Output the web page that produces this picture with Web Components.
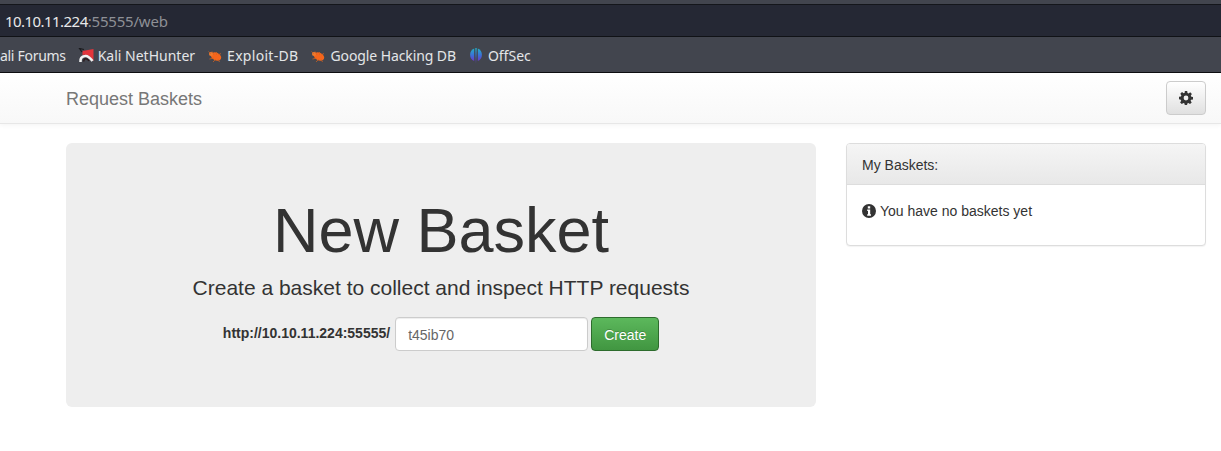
<!DOCTYPE html>
<html>
<head>
<meta charset="utf-8">
<style>
html, body { margin: 0; padding: 0; background: #fff; overflow: hidden; }
body { font: 14px/20px "Liberation Sans", Arial, sans-serif; color: #333; }
</style>
</head>
<body>
<browser-chrome>
    <bookmark-item label="ali Forums" style="letter-spacing: -.3px"></bookmark-item>
    <bookmark-item label="Kali NetHunter" icon="kali"></bookmark-item>
    <bookmark-item label="Exploit-DB" icon="bug" style="letter-spacing: .3px"></bookmark-item>
    <bookmark-item label="Google Hacking DB" icon="bug" style="letter-spacing: -.1px"></bookmark-item>
    <bookmark-item label="OffSec" icon="offsec"></bookmark-item>
</browser-chrome>
<basket-nav title-text="Request Baskets"></basket-nav>
<basket-page>
    <basket-jumbo slot="main" url="http://10.10.11.224:55555/" value="t45ib70"></basket-jumbo>
    <basket-panel slot="side" heading="My Baskets:">You have no baskets yet</basket-panel>
</basket-page>
<script>
const kIcons = {
    kali: `<svg width="16" height="16" viewBox="0 0 16 16"><path d="M4.500 3 L15.500 1 L15.500 13 L12 9 Q9 6 4.500 7Z" fill="#e2353c"/><path d="M2.500 14 Q2 8.500 7 8 Q10.500 7.500 14.500 13" stroke="#f2f2f2" stroke-width="2.600" fill="none"/><path d="M6 13.500 Q5.500 11 7.500 10.800 Q9.500 10.500 11 13" stroke="#2a1a1c" stroke-width="1.400" fill="none"/><path d="M6 1.500 L1.500 0.500 L4 4" stroke="#1b1b1e" stroke-width="1.200" fill="none"/></svg>`,
    bug: `<svg width="16" height="16" viewBox="0 0 16 16"><defs><filter id="b" x="-20%" y="-20%" width="140%" height="140%"><feGaussianBlur stdDeviation=".45"/></filter></defs><g filter="url(#b)"><ellipse cx="9" cy="8.500" rx="5.500" ry="3.800" transform="rotate(25 9 8.500)" fill="#f5651a"/><circle cx="4" cy="6" r="2" fill="#ef7a2e"/><path d="M1.500 3.500 L4 6 M5 3.500 L7 7 M9.500 4 L9.500 7 M14 5.500 L11 7 M2.500 11 L7 10 M6 14 L9 11 M12.500 14 L11 11" stroke="#d9651c" stroke-opacity=".7" stroke-width="1" fill="none"/></g></svg>`,
    offsec: `<svg width="16" height="17" viewBox="0 0 16 17"><defs><linearGradient id="o" x1="0" y1="0" x2="0" y2="1"><stop offset="0" stop-color="#22b0c8"/><stop offset=".55" stop-color="#3c6fd8"/><stop offset="1" stop-color="#6a38c8"/></linearGradient></defs><path d="M6.200 1.500 A7.500 7 0 0 0 6.200 14 Z" fill="url(#o)"/><path d="M9.800 1.500 A7.500 7 0 0 1 9.800 14 Z" fill="url(#o)"/><path d="M7.300 1 H8.700 L8.400 10 L8 16.500 L7.600 10Z" fill="url(#o)"/></svg>`
}

window.customElements.define('browser-chrome', class extends HTMLElement {
    constructor () {
        super()
        this.attachShadow({ mode: 'open' }).innerHTML = `<style>
        :host { display: block; font: 15px/20px "Noto Sans", "DejaVu Sans", sans-serif; }
        .top { height: 4px; background: #42454e; border-bottom: 1px solid #14161b; }
        .url { height: 31px; background: #252834; border-bottom: 1px solid #101216; display: flex; align-items: center; padding-left: 5px; color: #e8e8ea; letter-spacing: -.55px; }
        .url span { color: #8e9096; letter-spacing: -.2px; }
        .marks { height: 33px; padding-top: 2px; background: #42454e; border-bottom: 1px solid #0d0e11; display: flex; align-items: center; gap: 12px; overflow: hidden; color: #e4e6e8; font-size: 14px; }
        </style>
        <div class="top"></div>
        <div class="url">10.10.11.224<span>:55555/web</span></div>
        <div class="marks"><slot></slot></div>`
    }
})

window.customElements.define('bookmark-item', class extends HTMLElement {
    constructor () {
        super()
        const icon = kIcons[this.getAttribute('icon')] || ''
        this.attachShadow({ mode: 'open' }).innerHTML = `<style>
        :host { display: flex; align-items: center; gap: 4px; white-space: nowrap; flex: none; }
        svg { display: block; }
        </style>${icon}<span>${this.getAttribute('label')}</span>`
    }
})

window.customElements.define('basket-nav', class extends HTMLElement {
    constructor () {
        super()
        this.attachShadow({ mode: 'open' }).innerHTML = `<style>
        :host { display: flex; align-items: center; justify-content: space-between; box-sizing: border-box; height: 51px; padding: 0 15px 0 66px; background: linear-gradient(#fff, #f8f8f8); border-bottom: 1px solid #e7e7e7; box-shadow: 0 1px 5px rgba(0,0,0,.05); }
        .brand { font-size: 18px; color: #777; padding-top: 2px; }
        button { box-sizing: border-box; width: 40px; height: 34px; padding: 0; border: 1px solid #ccc; border-radius: 4px; background: linear-gradient(#fff, #e0e0e0); display: flex; align-items: center; justify-content: center; }
        </style>
        <span class="brand">${this.getAttribute('title-text')}</span>
        <button aria-label="Settings"><svg width="14" height="14" viewBox="0 0 14 14"><path fill="#333" fill-rule="evenodd" d="M5.800 0h2.400l.3 1.900 1.100.5L11.200 1.300l1.700 1.700-1.100 1.600.5 1.100 1.700.3v2.400l-1.900.3-.5 1.100 1.100 1.600-1.700 1.700-1.600-1.100-1.100.5-.3 1.900H5.800l-.3-1.900-1.100-.5-1.600 1.100-1.700-1.700 1.100-1.600-.5-1.100L0 8.200V5.800l1.900-.3.5-1.100L1.300 2.800 3 1.100l1.600 1.100 1.100-.5zM7 4.600a2.400 2.400 0 1 0 0 4.800 2.400 2.400 0 0 0 0-4.800z"/></svg></button>`
    }
})

window.customElements.define('basket-page', class extends HTMLElement {
    constructor () {
        super()
        this.attachShadow({ mode: 'open' }).innerHTML = `<style>
        :host { display: grid; grid-template-columns: 750px 360px; column-gap: 30px; padding: 19px 15px 0 66px; align-items: start; }
        </style>
        <slot name="main"></slot><slot name="side"></slot>`
    }
})

window.customElements.define('basket-jumbo', class extends HTMLElement {
    constructor () {
        super()
        this.attachShadow({ mode: 'open' }).innerHTML = `<style>
        :host { display: block; box-sizing: border-box; height: 264px; padding-top: 47px; background: #eee; border-radius: 6px; text-align: center; }
        h1 { margin: 0; font-size: 63px; font-weight: 500; line-height: 80px; color: #333; }
        p { margin: 3px 0 0; font-size: 21px; line-height: 30px; font-weight: 400; }
        form { margin-top: 14px; display: flex; justify-content: center; align-items: center; gap: 3px; }
        b { font-size: 14px; margin-right: 2px; margin-top: -3px; }
        input { box-sizing: border-box; width: 193px; height: 34px; padding: 8px 12px 6px; border: 1px solid #ccc; border-radius: 4px; font: 14px "Liberation Sans", sans-serif; color: #666; background: #fff; box-shadow: inset 0 1px 1px rgba(0,0,0,.075); }
        button { box-sizing: border-box; width: 68px; height: 34px; padding: 2px 0 0; border: 1px solid #2d6c2d; border-radius: 4px; background: linear-gradient(#5cb85c, #419641); color: #fff; font: 14px "Liberation Sans", sans-serif; text-shadow: 0 -1px 0 rgba(0,0,0,.2); }
        </style>
        <h1>New Basket</h1>
        <p>Create a basket to collect and inspect HTTP requests</p>
        <form><b>${this.getAttribute('url')}</b><input value="${this.getAttribute('value')}"><button type="button">Create</button></form>`
    }
})

window.customElements.define('basket-panel', class extends HTMLElement {
    constructor () {
        super()
        this.attachShadow({ mode: 'open' }).innerHTML = `<style>
        :host { display: block; box-sizing: border-box; height: 103px; background: #fff; border: 1px solid #ddd; border-radius: 4px; box-shadow: 0 1px 1px rgba(0,0,0,.05); overflow: hidden; }
        header { box-sizing: border-box; height: 41px; padding: 1px 15px 0; display: flex; align-items: center; background: linear-gradient(#f5f5f5, #e8e8e8); border-bottom: 1px solid #ddd; }
        .body { padding: 16px 15px; display: flex; align-items: center; gap: 4px; }
        svg { display: block; flex: none; }
        </style>
        <header>${this.getAttribute('heading')}</header>
        <div class="body"><svg width="14" height="14" viewBox="0 0 14 14"><path fill="#333" fill-rule="evenodd" d="M7 0a7 7 0 1 0 0 14A7 7 0 0 0 7 0zM5.800 2.300h2.400v2.100H5.800zM5.200 5.600h3v4.600h.8v1.500H5.200v-1.500H6V7.100h-.8z"/></svg><span><slot></slot></span></div>`
    }
})
</script>
</body>
</html>
